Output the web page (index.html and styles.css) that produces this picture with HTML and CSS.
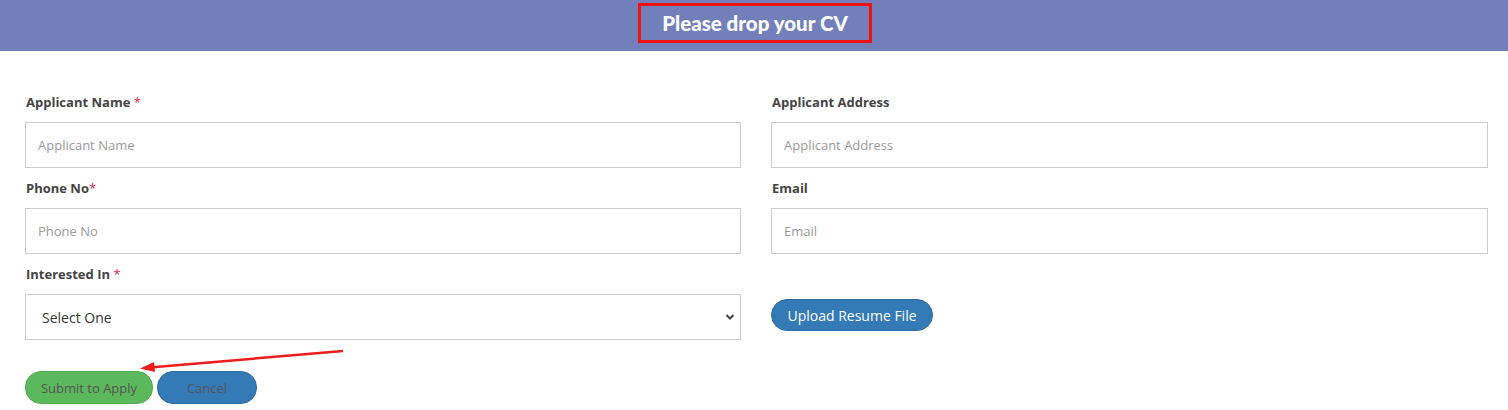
FILE: index.html
```html
<!DOCTYPE html>
<html>
<head>
<meta charset="utf-8">
<link rel="stylesheet" href="styles.css">
</head>
<body>
<header class="banner">
  <h1 class="banner-title">Please drop your CV</h1>
</header>
<form class="cv-form">
  <div class="grid">
    <div class="field">
      <label class="label">Applicant Name <span class="req">*</span></label>
      <input class="input" type="text" placeholder="Applicant Name">
    </div>
    <div class="field">
      <label class="label">Applicant Address</label>
      <input class="input" type="text" placeholder="Applicant Address">
    </div>
    <div class="field">
      <label class="label">Phone No<span class="req">*</span></label>
      <input class="input" type="text" placeholder="Phone No">
    </div>
    <div class="field">
      <label class="label">Email</label>
      <input class="input" type="text" placeholder="Email">
    </div>
    <div class="field">
      <label class="label">Interested In <span class="req">*</span></label>
      <div class="select-wrap">
        <select class="select"><option>Select One</option></select>
        <svg class="chev" width="10" height="8" viewBox="0 0 10 8"><path d="M1.5 2 L5 5.5 L8.5 2" fill="none" stroke="#444" stroke-width="2"/></svg>
      </div>
    </div>
    <div class="field upload-field">
      <button type="button" class="btn btn-upload">Upload Resume File</button>
    </div>
  </div>
  <div class="actions">
    <button type="button" class="btn btn-submit">Submit to Apply</button>
    <button type="button" class="btn btn-cancel">Cancel</button>
  </div>
  <svg class="arrow" width="220" height="30" viewBox="0 0 220 30">
    <line x1="205" y1="2" x2="12" y2="18.5" stroke="#ee1c1c" stroke-width="2.5"/>
    <path d="M2 19.5 L16 13 L17 23 Z" fill="#ee1c1c"/>
  </svg>
</form>
</body>
</html>
```
FILE: styles.css
```css
* { box-sizing: border-box; }
body {
  margin: 0;
  background: #fff;
  font-family: "Open Sans", "Liberation Sans", sans-serif;
}
.banner {
  background: #737fba;
  height: 51px;
  display: flex;
  justify-content: center;
  padding-top: 3px;
}
.banner-title {
  margin: 0;
  width: 234px;
  height: 40px;
  border: 3px solid #ee1111;
  color: #fff;
  font-family: "Lato", "Open Sans", sans-serif;
  font-weight: 900;
  font-size: 20.5px;
  line-height: 34px;
  text-align: center;
  margin-left: 2px;
}
.cv-form {
  position: relative;
  padding: 41px 20px 0 25px;
}
.grid {
  display: grid;
  grid-template-columns: 716px 717px;
  column-gap: 30px;
  row-gap: 10px;
}
.field {
  display: flex;
  flex-direction: column;
}
.label {
  font-size: 13px;
  font-weight: 700;
  color: #444;
  line-height: 20px;
  height: 20px;
  margin-bottom: 10px;
  padding-left: 1px;
}
.req { color: #e0203a; font-weight: 400; }
.input {
  height: 46px;
  border: 1px solid #ccc;
  padding: 0 12px;
  font-family: inherit;
  font-size: 13px;
  color: #555;
  outline: none;
}
.input::placeholder { color: #999; }
.select-wrap {
  position: relative;
  height: 46px;
}
.select {
  appearance: none;
  -webkit-appearance: none;
  width: 100%;
  height: 46px;
  border: 1px solid #ccc;
  background: #fff;
  padding: 0 16px;
  font-family: inherit;
  font-size: 14px;
  color: #333;
}
.chev {
  position: absolute;
  right: 6px;
  top: 19px;
}
.upload-field {
  justify-content: flex-end;
  padding-bottom: 9px;
}
.btn {
  font-family: inherit;
  border-radius: 16px;
  cursor: pointer;
}
.btn-upload {
  align-self: flex-start;
  width: 162px;
  height: 32px;
  background: #337ab7;
  border: 1px solid #2e6da4;
  color: #fff;
  font-size: 14px;
  padding: 0;
}
.actions {
  display: flex;
  gap: 4px;
  margin-top: 31px;
}
.btn-submit {
  width: 128px;
  height: 33px;
  background: #5cb85c;
  border: 1px solid #4cae4c;
  color: #555;
  font-size: 13px;
  padding: 0;
}
.btn-cancel {
  width: 100px;
  height: 33px;
  background: #337ab7;
  border: 1px solid #2e6da4;
  color: #555;
  font-size: 13px;
  padding: 0;
}
.arrow {
  position: absolute;
  left: 138px;
  top: 298px;
}
```
